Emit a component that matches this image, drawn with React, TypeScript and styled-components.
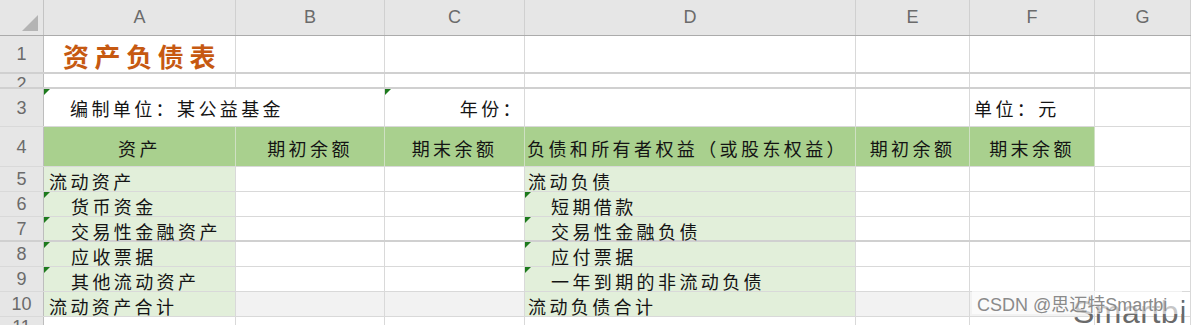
import styled, { createGlobalStyle, css } from "styled-components";

const GlobalStyle = createGlobalStyle`
  html, body {
    margin: 0;
    padding: 0;
    background: #ffffff;
  }
  body {
    font-family: "Noto Sans CJK SC", "Noto Sans", sans-serif;
  }
`;

const COLS = "44px 192px 149px 140px 331px 114px 125px 1fr";
const GREEN = "#a9d08e";
const LIGHT_GREEN = "#e2efda";
const GREY = "#f2f2f2";

const Sheet = styled.div`
    position: relative;
    width: 1191px;
    height: 325px;
    overflow: hidden;
`;

const HeadRow = styled.div`
    display: grid;
    grid-template-columns: ${COLS};
    grid-template-rows: minmax(0, 1fr);
    height: 36px;
    box-sizing: border-box;
    background: #e6e6e6;
    border-bottom: 1px solid #ababab;
`;

const Corner = styled.div`
    display: flex;
    align-items: flex-end;
    justify-content: flex-end;
    padding: 0 5px 4px 0;
    border-right: 1px solid #c4c4c4;

    &::after {
        content: "";
        width: 0;
        height: 0;
        border-left: 16px solid transparent;
        border-bottom: 16px solid #b4b4b4;
    }
`;

const ColHead = styled.div`
    display: flex;
    align-items: center;
    justify-content: center;
    border-right: 1px solid #d0d0d0;
    font-family: "Liberation Sans", "Noto Sans", sans-serif;
    font-size: 18px;
    color: #6b6b6b;
`;

const Row = styled.div<{ $h: number; $thick?: boolean }>`
    display: grid;
    grid-template-columns: ${COLS};
    grid-template-rows: minmax(0, 1fr);
    height: ${(p) => p.$h}px;
    box-sizing: border-box;
    border-bottom: ${(p) => (p.$thick ? "2px solid #d0d0d0" : "1px solid #d9d9d9")};
`;

const RowNum = styled.div<{ $top?: boolean }>`
    display: flex;
    justify-content: center;
    align-items: ${(p) => (p.$top ? "flex-start" : "center")};
    overflow: hidden;
    min-height: 0;
    background: #e6e6e6;
    border-right: 1px solid #bdbdbd;
    font-family: "Liberation Sans", "Noto Sans", sans-serif;
    font-size: 18px;
    line-height: 18px;
    padding-top: ${(p) => (p.$top ? 1 : 0)}px;
    box-sizing: border-box;
    color: #6b6b6b;
`;

type Align = "left" | "center" | "right";

const Cell = styled.div<{
    $bg?: string;
    $align?: Align;
    $indent?: number;
    $tri?: boolean;
    $span?: number;
    $bottom?: boolean;
    $head?: boolean;
}>`
    position: relative;
    min-height: 0;
    box-sizing: border-box;
    display: flex;
    align-items: ${(p) => (p.$bottom ? "flex-end" : "center")};
    justify-content: ${(p) =>
        p.$align === "center" ? "center" : p.$align === "right" ? "flex-end" : "flex-start"};
    grid-column: span ${(p) => p.$span ?? 1};
    padding: ${(p) => (p.$bottom ? "0 0 9px 0" : p.$head ? "3px 0 0 0" : "4px 0 0 0")};
    padding-left: ${(p) => p.$indent ?? 0}px;
    background: ${(p) => p.$bg ?? "#ffffff"};
    border-right: 1px solid ${(p) => (p.$bg === GREEN ? "#cfe0c3" : "#d9d9d9")};
    font-size: 18px;
    line-height: 18px;
    letter-spacing: 3.4px;
    color: #141414;
    white-space: nowrap;

    ${(p) =>
        p.$tri &&
        css`
            &::before {
                content: "";
                position: absolute;
                top: 0;
                left: 0;
                width: 0;
                height: 0;
                border-top: 6px solid #1d7a1d;
                border-right: 6px solid transparent;
            }
        `}
`;

const Title = styled.span`
    font-size: 26px;
    line-height: 26px;
    font-weight: 700;
    letter-spacing: 5.6px;
    color: #c65911;
`;

const BigMark = styled.div`
    position: absolute;
    left: 1073px;
    top: 294px;
    font-family: "Liberation Sans", "Noto Sans", sans-serif;
    font-size: 32px;
    color: #6a6a6a;
    letter-spacing: 0.5px;
`;

const Mark = styled.div`
    position: absolute;
    left: 972px;
    top: 291px;
    width: 210px;
    height: 23px;
    display: flex;
    align-items: center;
    padding-left: 5px;
    box-sizing: border-box;
    background: rgba(255, 255, 255, 0.62);
    font-family: "Liberation Sans", "Noto Sans CJK SC", sans-serif;
    font-size: 18px;
    color: #8a8a8a;
    white-space: nowrap;
`;

type BodyRow = {
    num: string;
    left: string;
    leftIndent: boolean;
    right: string;
    rightIndent: boolean;
    total?: boolean;
    thick?: boolean;
};

const BODY: BodyRow[] = [
    { num: "5", left: "流动资产", leftIndent: false, right: "流动负债", rightIndent: false },
    { num: "6", left: "货币资金", leftIndent: true, right: "短期借款", rightIndent: true },
    { num: "7", left: "交易性金融资产", leftIndent: true, right: "交易性金融负债", rightIndent: true, thick: true },
    { num: "8", left: "应收票据", leftIndent: true, right: "应付票据", rightIndent: true },
    { num: "9", left: "其他流动资产", leftIndent: true, right: "一年到期的非流动负债", rightIndent: true },
    { num: "10", left: "流动资产合计", leftIndent: false, right: "流动负债合计", rightIndent: false, total: true },
];

export default function App() {
    return (
        <Sheet>
            <GlobalStyle />
            <HeadRow>
                <Corner />
                {["A", "B", "C", "D", "E", "F", "G"].map((c) => (
                    <ColHead key={c}>{c}</ColHead>
                ))}
            </HeadRow>

            <Row $h={38} $thick>
                <RowNum>1</RowNum>
                <Cell $indent={19}>
                    <Title>资产负债表</Title>
                </Cell>
                <Cell />
                <Cell />
                <Cell />
                <Cell />
                <Cell />
                <Cell />
            </Row>

            <Row $h={15} $thick>
                <RowNum $top>2</RowNum>
                <Cell />
                <Cell />
                <Cell />
                <Cell />
                <Cell />
                <Cell />
                <Cell />
            </Row>

            <Row $h={38}>
                <RowNum>3</RowNum>
                <Cell $span={2} $indent={26} $tri $bottom>
                    编制单位：某公益基金
                </Cell>
                <Cell $align="right" $tri $bottom>
                    年份：
                </Cell>
                <Cell />
                <Cell />
                <Cell $indent={4} $bottom>
                    单位：元
                </Cell>
                <Cell />
            </Row>

            <Row $h={40}>
                <RowNum>4</RowNum>
                <Cell $bg={GREEN} $align="center" $head>资产</Cell>
                <Cell $bg={GREEN} $align="center" $head>期初余额</Cell>
                <Cell $bg={GREEN} $align="center" $head>期末余额</Cell>
                <Cell $bg={GREEN} $indent={2} $head>负债和所有者权益（或股东权益）</Cell>
                <Cell $bg={GREEN} $align="center" $head>期初余额</Cell>
                <Cell $bg={GREEN} $align="center" $head>期末余额</Cell>
                <Cell />
            </Row>

            {BODY.map((r) => (
                <Row key={r.num} $h={25} $thick={r.thick}>
                    <RowNum>{r.num}</RowNum>
                    <Cell $bg={LIGHT_GREEN} $indent={r.leftIndent ? 27 : 5} $tri={r.leftIndent}>
                        {r.left}
                    </Cell>
                    <Cell $bg={r.total ? GREY : undefined} />
                    <Cell $bg={r.total ? GREY : undefined} />
                    <Cell $bg={LIGHT_GREEN} $indent={r.rightIndent ? 26 : 3} $tri={r.rightIndent}>
                        {r.right}
                    </Cell>
                    <Cell $bg={r.total ? GREY : undefined} />
                    <Cell $bg={r.total ? GREY : undefined} />
                    <Cell />
                </Row>
            ))}

            <Row $h={20}>
                <RowNum $top>11</RowNum>
                <Cell />
                <Cell />
                <Cell />
                <Cell />
                <Cell />
                <Cell />
                <Cell />
            </Row>

            <BigMark>Smartbi</BigMark>
            <Mark>CSDN @思迈特Smartbi</Mark>
        </Sheet>
    );
}
